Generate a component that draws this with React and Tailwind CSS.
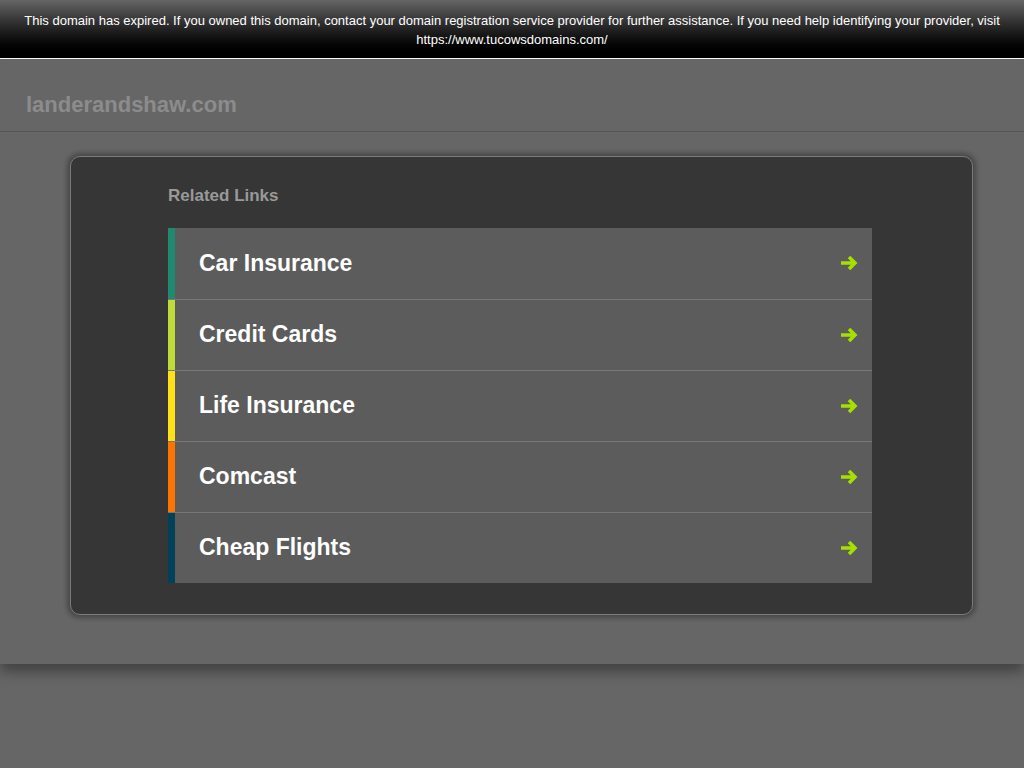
export default function App() {
  const links = [
    ["Car Insurance", "bg-[#1f8a70]"],
    ["Credit Cards", "bg-[#bedb39]"],
    ["Life Insurance", "bg-[#ffe11a]"],
    ["Comcast", "bg-[#fd7400]"],
    ["Cheap Flights", "bg-[#004358]"],
  ];
  return (
    <div className="min-h-[768px] bg-[#666666] font-[family-name:Liberation_Sans,Arial,sans-serif]">
      <div className="h-[59px] border-b border-white bg-gradient-to-b from-[#666] to-black px-2 pt-[11px] text-center text-[13px] leading-[19px] text-white">
        This domain has expired. If you owned this domain, contact your domain registration service provider for further assistance. If you need help identifying your provider, visit https://www.tucowsdomains.com/
      </div>
      <div className="shadow-[0_8px_12px_rgba(0,0,0,0.35)] pb-[49px]">
        <div className="h-[73px] border-b border-[#555] px-[26px] pt-[31px] text-[22px] font-bold leading-[30px] text-[#8c8c8c]">
          landerandshaw.com
        </div>
        <div className="ml-[70px] mr-[51px] mt-[24px] h-[459px] rounded-[10px] border border-[#7a7a7a] bg-[#363636] pl-[97px] pt-[26px] shadow-[0_0_5px_3px_rgba(0,0,0,0.3)]">
          <div className="text-[17px] font-bold text-[#999]">Related Links</div>
          <div className="mt-[19px] w-[704px]">
            {links.map(([t, c], i) => (
              <div key={t} className={`flex h-[71px] items-center bg-[#5c5c5c] ${i > 0 ? "border-t border-[#777]" : ""}`}>
                <div className={`h-full w-[7px] ${c}`} />
                <div className="flex-1 pl-[24px] text-[23px] font-bold text-white">{t}</div>
                <svg width="20" height="18" viewBox="0 0 20 18" className="mr-[12px]">
                  <path d="M1 9h14M9 3l6 6-6 6" stroke="#a5e000" strokeWidth="3.5" fill="none" />
                </svg>
              </div>
            ))}
          </div>
        </div>
      </div>
    </div>
  );
}
